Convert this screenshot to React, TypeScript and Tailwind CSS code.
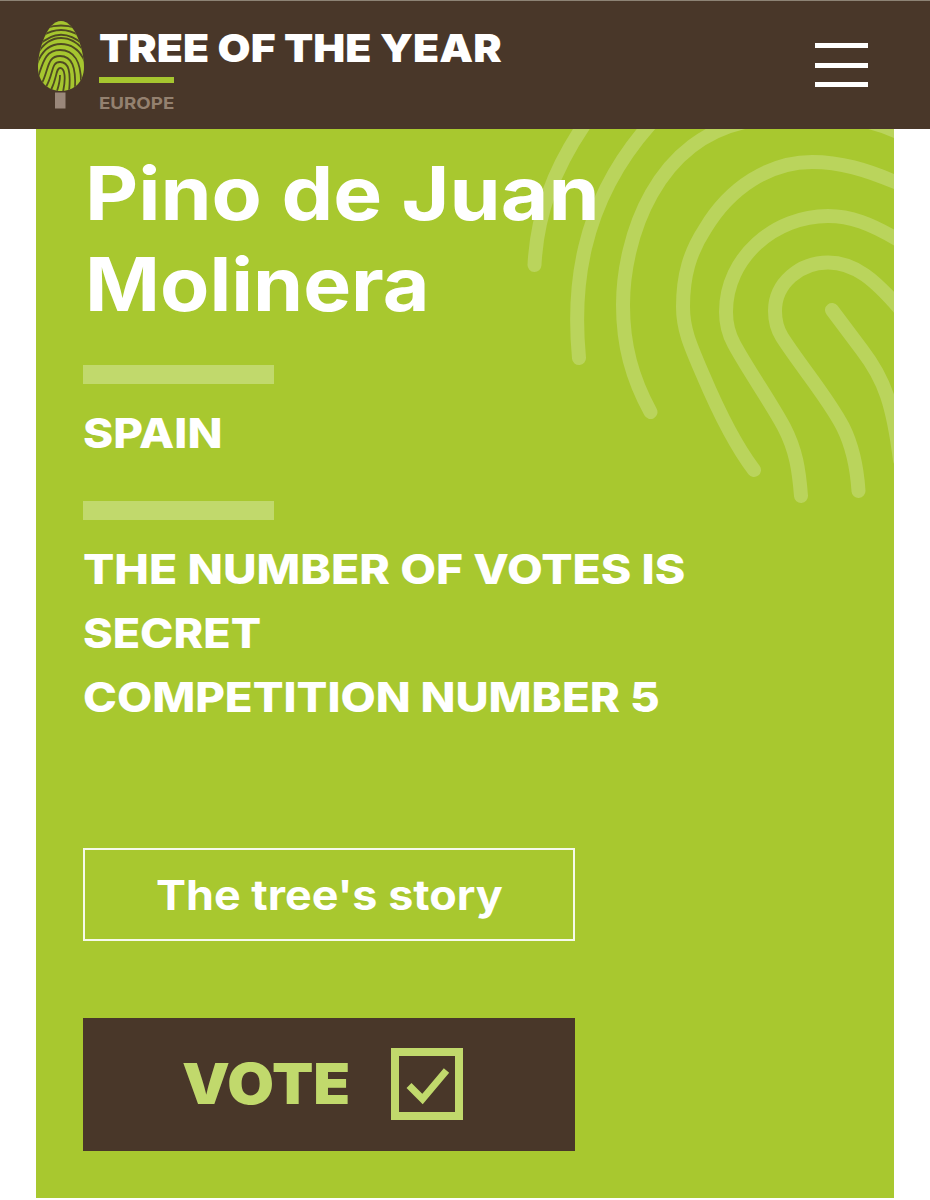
import type { ReactNode } from "react"

function TreeLogo() {
  return (
    <svg viewBox="36 18 50 92" className="h-[92px] w-[50px] shrink-0" aria-hidden="true">
      <defs>
        <clipPath id="crown">
          <path d="M61 21C75 21 84 50 84 67C84 82 74 91 61 91C48 91 38 82 38 67C38 50 47 21 61 21Z" />
        </clipPath>
      </defs>
      <rect x="55" y="92.500" width="10.500" height="16" fill="#9a877a" />
      <g clipPath="url(#crown)">
        <rect x="36" y="18" width="50" height="75" fill="#a6c62f" />
        <g fill="none" stroke="#4f4a22" strokeWidth="1.800">
          <path d="M46 28Q61 23 76 28" />
          <path d="M42 36Q61 24 80 36" />
          <path d="M38 46Q60 24 84 45" />
          <path d="M36 56Q46 38 61 38Q76 38 86 54" />
          <path d="M36 67Q43 44 61 44Q78 44 86 64" />
          <path d="M38 77C43 63 45 50 60 50C74 50 81 62 81 82" />
          <path d="M42 83C49 69 47 56 60 56C72 56 76 67 75 88" />
          <path d="M46 87C54 73 51 62 60 62C69 62 71 72 69 92" />
          <path d="M51 90C57 78 56 68 60 68C65 68 66 78 63 92" />
          <path d="M57 91Q60 82 60 75" />
        </g>
      </g>
    </svg>
  )
}

function Fingerprint() {
  return (
    <svg
      viewBox="500 129 394 400"
      className="pointer-events-none absolute top-0 right-0 h-[400px] w-[394px]"
      fill="none"
      stroke="#bad45c"
      strokeWidth="14"
      strokeLinecap="round"
      aria-hidden="true"
    >
      <path d="M534.500 265C537 215 553 170 586 122" />
      <path d="M579 358C573 295 577 205 652 122" />
      <path d="M650.500 412C632 378 623 345 623 305C623 240 655 135 755 120C810 110 860 115 898 132" />
      <path d="M754 470C735 445 717 408 703 375C691 347 683 330 683 307C683 275 690 252 705 229C730 187 770 162 812 162C840 162 865 169 900 184" />
      <path d="M801 496C799 470 796 450 784 427C770 401 748 370 734 344C728 333 726 323 726 312C726 257 775 216 828 216C850 216 870 223 900 241" />
      <path d="M858.500 491C857 468 853 447 843 427C828 398 802 368 782 337C777 329 775 322 775 311C775 283 800 262.500 828 262.500C855 262.500 875 280 900 309" />
      <path d="M832 310L862 350C885 380 893 405 900 460" />
    </svg>
  )
}

function Header() {
  return (
    <header className="flex h-[129px] justify-between border-t border-[#8d8375] bg-[#493729] pr-[62px] pl-9">
      <div className="flex pt-[17px]">
        <TreeLogo />
        <div className="flex flex-col items-start pt-[6px] pl-[13px]">
          <span className="h-[48px] origin-left scale-x-[1.094] text-[39px] leading-[48px] font-black whitespace-nowrap text-white">
            TREE OF THE YEAR
          </span>
          <span className="mt-[5px] h-[6px] w-[75px] bg-[#a6c62f]" />
          <span className="mt-[10px] origin-left scale-x-[1.17] text-[16px] leading-[20px] font-bold text-[#94816f]">
            EUROPE
          </span>
        </div>
      </div>
      <button aria-label="Menu" className="mt-[42px] flex h-[44px] w-[53px] flex-col justify-between">
        <span className="h-[5px] w-full bg-white" />
        <span className="h-[5px] w-full bg-white" />
        <span className="h-[5px] w-full bg-white" />
      </button>
    </header>
  )
}

function Divider() {
  return <div className="h-[19px] w-[191px] bg-[#c1d96c]" />
}

function Line({ children, className }: { children: ReactNode; className: string }) {
  return <span className={`block w-max origin-left ${className}`}>{children}</span>
}

export default function App() {
  return (
    <div className="h-[1200px] w-[930px] overflow-hidden bg-white font-['Inter',sans-serif]">
      <Header />
      <main className="relative mx-9 flex h-[1069px] flex-col items-start bg-[#a8c82f] pl-[47px] text-white">
        <Fingerprint />
        <h1 className="relative mt-[19px] pl-[2px] text-[74px] leading-[91px] font-bold">
          <Line className="scale-x-[1.11]">Pino de Juan</Line>
          <Line className="scale-x-[1.088]">Molinera</Line>
        </h1>
        <div className="mt-[35px]">
          <Divider />
        </div>
        <p className="mt-[17px] text-[41px] leading-[64px] font-extrabold">
          <Line className="scale-x-[1.117]">SPAIN</Line>
        </p>
        <div className="mt-[36px]">
          <Divider />
        </div>
        <p className="mt-[17px] text-[41px] leading-[64px] font-extrabold">
          <Line className="scale-x-[1.13]">THE NUMBER OF VOTES IS</Line>
          <Line className="scale-x-[1.096]">SECRET</Line>
          <Line className="scale-x-[1.112]">COMPETITION NUMBER 5</Line>
        </p>
        <button className="mt-[119px] flex h-[93px] w-[492px] items-center border-2 border-white/90 pt-[2px] pl-[71px] text-[41px] font-bold">
          <Line className="scale-x-[1.095]">The tree's story</Line>
        </button>
        <button className="mt-[77px] flex h-[133px] w-[492px] items-center bg-[#493729] pb-px pl-[99px] text-[56px] leading-[64px] font-black text-[#c1d96c]">
          <span className="w-[209px]">
            <Line className="scale-x-[1.077]">VOTE</Line>
          </span>
          <svg viewBox="0 0 72 72" className="size-[72px]" fill="none" stroke="currentColor" aria-hidden="true">
            <rect x="4" y="4" width="64" height="64" strokeWidth="8" />
            <path d="M18 37.500L31.500 51L55.500 22.500" strokeWidth="7" />
          </svg>
        </button>
      </main>
    </div>
  )
}
